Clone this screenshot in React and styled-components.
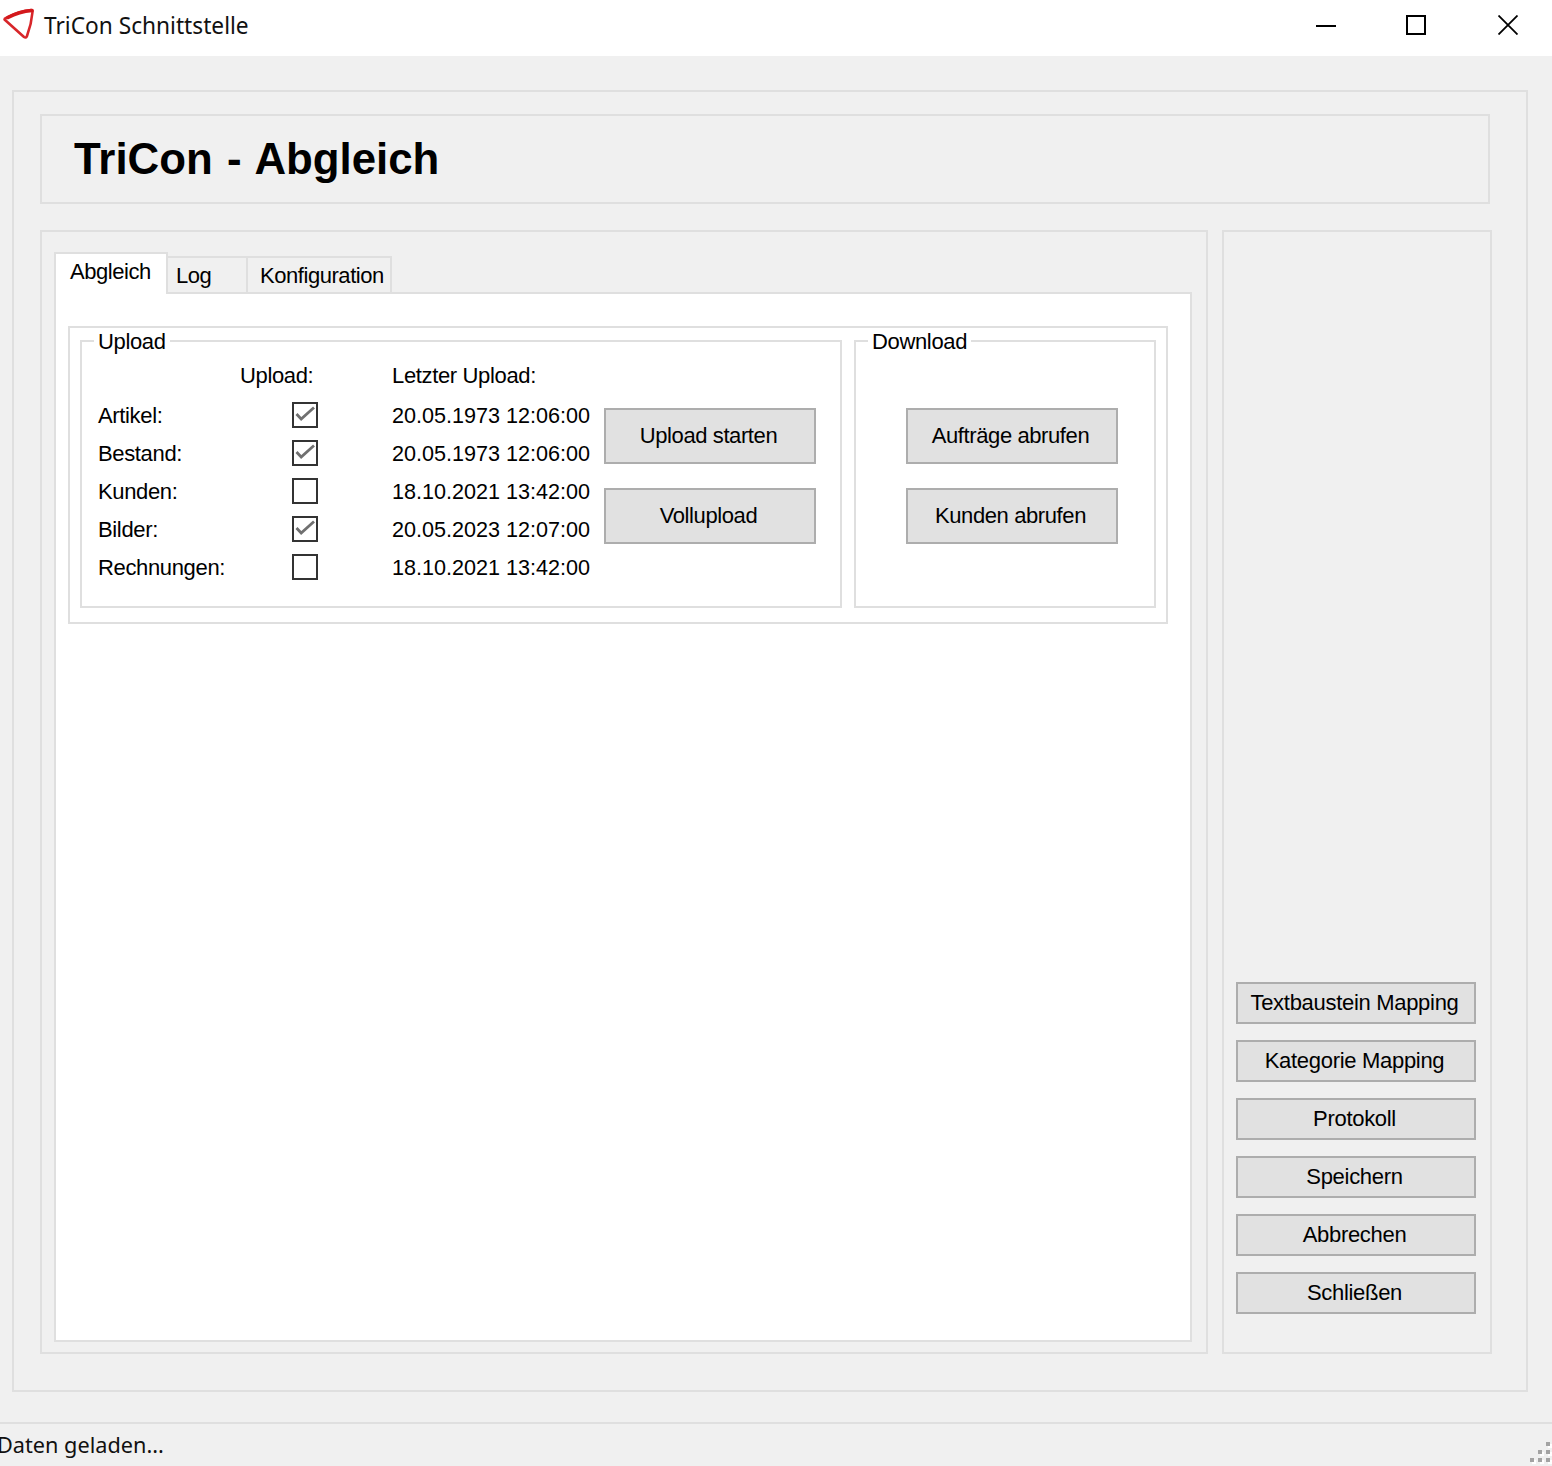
import React from "react";
import styled, { createGlobalStyle } from "styled-components";

const GlobalStyle = createGlobalStyle`
  html, body {
    margin: 0;
    padding: 0;
    background: #f0f0f0;
  }
  * {
    box-sizing: border-box;
  }
`;

const Win = styled.div`
  width: 1552px;
  height: 1466px;
  display: flex;
  flex-direction: column;
  overflow: hidden;
  background: #f0f0f0;
  color: #000;
  font-family: "Liberation Sans", Arial, sans-serif;
  font-size: 22px;
`;

const TitleBar = styled.header`
  height: 56px;
  flex: none;
  display: flex;
  align-items: center;
  background: #fff;
  padding: 0 34px 6px 2px;
`;

const WinTitle = styled.span`
  margin-left: 8px;
  padding-top: 2px;
  flex: 1;
  font-family: "Noto Sans", sans-serif;
  font-size: 22.700px;
  line-height: 30px;
  color: #111;
`;

const WinControls = styled.div`
  display: flex;
  gap: 70px;
  & > svg:last-child {
    margin-left: 2px;
  }
`;

const Main = styled.main`
  flex: 1;
  min-height: 0;
  padding: 34px 24px 30px 12px;
`;

const Frame = styled.div`
  height: 100%;
  border: 2px solid #dfdfdf;
  padding: 22px 34px 36px 26px;
  display: flex;
  flex-direction: column;
  gap: 26px;
`;

const Header = styled.div`
  height: 90px;
  flex: none;
  margin-right: 2px;
  border: 2px solid #dfdfdf;
  padding-left: 32px;
  display: flex;
  align-items: center;
`;

const Heading = styled.h1`
  margin: 0;
  font-family: "Liberation Sans", Arial, sans-serif;
  font-size: 43.800px;
  font-weight: 700;
  line-height: 50px;
  word-spacing: 2.200px;
`;

const Columns = styled.div`
  flex: 1;
  min-height: 0;
  display: grid;
  grid-template-columns: 1168px 270px;
  gap: 14px;
`;

const LeftPanel = styled.section`
  border: 2px solid #dfdfdf;
  padding: 20px 14px 10px 12px;
  display: flex;
  flex-direction: column;
`;

const TabStrip = styled.div`
  height: 42px;
  flex: none;
  display: flex;
  align-items: flex-end;
  margin-bottom: -2px;
`;

const Tab = styled.div`
  position: relative;
  width: ${(p) => p.$width}px;
  height: ${(p) => (p.$active ? 42 : 38)}px;
  padding-top: 5px;
  padding-left: ${(p) => p.$pad}px;
  line-height: 26px;
  letter-spacing: -0.45px;
  background: ${(p) => (p.$active ? "#fff" : "#f0f0f0")};
  border: 2px solid #dfdfdf;
  border-left-width: ${(p) => (p.$active ? 2 : 0)}px;
  border-bottom-width: ${(p) => (p.$active ? 0 : 2)}px;
  z-index: ${(p) => (p.$active ? 2 : 0)};
`;

const TabBody = styled.div`
  flex: 1;
  min-height: 0;
  background: #fff;
  border: 2px solid #dfdfdf;
  padding: 32px 22px 0 12px;
`;

const GroupRow = styled.div`
  height: 298px;
  border: 2px solid #dfdfdf;
  padding: 12px 10px 14px;
  display: flex;
  gap: 12px;
`;

const Group = styled.div`
  position: relative;
  width: ${(p) => p.$width}px;
  height: 268px;
  border: 2px solid #dfdfdf;
  display: flex;
  padding-top: ${(p) => p.$top}px;
  padding-left: ${(p) => p.$left}px;
`;

const Legend = styled.span`
  position: absolute;
  top: -13px;
  left: 12px;
  padding: 0 4px;
  background: #fff;
  line-height: 26px;
  letter-spacing: -0.35px;
`;

const UploadTable = styled.div`
  display: grid;
  grid-template-columns: 142px 152px 212px;
  grid-auto-rows: 38px;
  grid-template-rows: 40px;
  align-items: center;
  line-height: 26px;
`;

const HeadCell = styled.span`
  letter-spacing: -0.35px;
  white-space: nowrap;
`;

const Cell = styled(HeadCell)`
  padding-top: 2px;
`;

const DateCell = styled.span`
  padding-top: 2px;
  white-space: nowrap;
  font-size: 21.600px;
`;

const CheckBox = styled.span`
  width: 26px;
  height: 26px;
  margin-left: 52px;
  border: 2px solid #333;
  background: #fff;
  display: flex;
  align-items: center;
  justify-content: center;
`;

const ButtonStack = styled.div`
  display: flex;
  flex-direction: column;
  gap: 24px;
  padding-top: ${(p) => p.$top || 0}px;
`;

const Button = styled.button`
  width: 212px;
  height: 56px;
  flex: none;
  padding: 0 3px 0 0;
  background: #e1e1e1;
  border: 2px solid #adadad;
  border-radius: 0;
  font-family: "Liberation Sans", Arial, sans-serif;
  font-size: 22px;
  letter-spacing: -0.4px;
  color: #000;
`;

const SideButton = styled(Button)`
  width: 240px;
  height: 42px;
  letter-spacing: -0.3px;
`;

const RightPanel = styled.aside`
  border: 2px solid #dfdfdf;
  padding: 0 14px 38px 12px;
  display: flex;
  flex-direction: column;
  justify-content: flex-end;
  gap: 16px;
`;

const StatusBar = styled.footer`
  position: relative;
  height: 44px;
  flex: none;
  border-top: 2px solid #dfdfdf;
  display: flex;
  align-items: center;
  padding-bottom: 2px;
`;

const StatusText = styled.span`
  margin-left: -3px;
  font-family: "Noto Sans", sans-serif;
  font-size: 21.700px;
  color: #111;
`;

const Grip = styled.svg`
  position: absolute;
  right: 0;
  bottom: 0;
`;

const Logo = () => (
  <svg width="34" height="42" viewBox="0 0 34 42">
    <path
      d="M2.500 15.500 Q2.500 14.500 4 14 Q16 7.500 29 6 Q31 6 30.500 8 Q29.500 20 25 32 Q24 34.500 22 33 Z"
      fill="#fff"
      stroke="#d8262a"
      strokeWidth="2.600"
      strokeLinejoin="round"
    />
    <path d="M6 13.500 Q17 7.500 30 6.500" fill="none" stroke="#d3191c" strokeWidth="3.600" strokeLinecap="round" />
  </svg>
);

const Check = () => (
  <svg width="22" height="22" viewBox="0 0 22 22">
    <path d="M2.500 10 L7.200 15 L20 3.500" fill="none" stroke="#707070" strokeWidth="2.800" />
  </svg>
);

const rows = [
  { name: "Artikel:", on: true, date: "20.05.1973 12:06:00" },
  { name: "Bestand:", on: true, date: "20.05.1973 12:06:00" },
  { name: "Kunden:", on: false, date: "18.10.2021 13:42:00" },
  { name: "Bilder:", on: true, date: "20.05.2023 12:07:00" },
  { name: "Rechnungen:", on: false, date: "18.10.2021 13:42:00" },
];

const sideButtons = [
  "Textbaustein Mapping",
  "Kategorie Mapping",
  "Protokoll",
  "Speichern",
  "Abbrechen",
  "Schließen",
];

const gripDots = [
  [1546, 1442],
  [1538, 1450],
  [1546, 1450],
  [1530, 1458],
  [1538, 1458],
  [1546, 1458],
];

export default function App() {
  return (
    <>
      <GlobalStyle />
      <Win>
        <TitleBar>
          <Logo />
          <WinTitle>TriCon Schnittstelle</WinTitle>
          <WinControls>
            <svg width="20" height="20" viewBox="0 0 20 20">
              <rect x="0" y="10" width="20" height="2" fill="#000" />
            </svg>
            <svg width="20" height="20" viewBox="0 0 20 20">
              <rect x="1" y="1" width="18" height="18" fill="none" stroke="#000" strokeWidth="2" />
            </svg>
            <svg width="20" height="20" viewBox="0 0 20 20">
              <path d="M0.500 0.500 L19.500 19.500 M19.500 0.500 L0.500 19.500" stroke="#000" strokeWidth="1.800" />
            </svg>
          </WinControls>
        </TitleBar>

        <Main>
          <Frame>
            <Header>
              <Heading>TriCon - Abgleich</Heading>
            </Header>
            <Columns>
              <LeftPanel>
                <TabStrip>
                  <Tab $active $width={114} $pad={14}>Abgleich</Tab>
                  <Tab $width={80} $pad={8}>Log</Tab>
                  <Tab $width={144} $pad={12}>Konfiguration</Tab>
                </TabStrip>
                <TabBody>
                  <GroupRow>
                    <Group $width={762} $top={14} $left={16}>
                      <Legend>Upload</Legend>
                      <UploadTable>
                        <span />
                        <HeadCell>Upload:</HeadCell>
                        <HeadCell>Letzter Upload:</HeadCell>
                        {rows.map((row) => (
                          <React.Fragment key={row.name}>
                            <Cell>{row.name}</Cell>
                            <CheckBox>{row.on && <Check />}</CheckBox>
                            <DateCell>{row.date}</DateCell>
                          </React.Fragment>
                        ))}
                      </UploadTable>
                      <ButtonStack $top={52}>
                        <Button>Upload starten</Button>
                        <Button>Vollupload</Button>
                      </ButtonStack>
                    </Group>
                    <Group $width={302} $top={66} $left={50}>
                      <Legend>Download</Legend>
                      <ButtonStack>
                        <Button>Aufträge abrufen</Button>
                        <Button>Kunden abrufen</Button>
                      </ButtonStack>
                    </Group>
                  </GroupRow>
                </TabBody>
              </LeftPanel>
              <RightPanel>
                {sideButtons.map((label) => (
                  <SideButton key={label}>{label}</SideButton>
                ))}
              </RightPanel>
            </Columns>
          </Frame>
        </Main>

        <StatusBar>
          <StatusText>Daten geladen...</StatusText>
          <Grip width="24" height="30" viewBox="1528 1436 24 30">
            {gripDots.map(([x, y]) => (
              <React.Fragment key={`${x}-${y}`}>
                <rect x={x + 2} y={y + 2} width="4" height="4" fill="#fff" />
                <rect x={x} y={y} width="4" height="4" fill="#a3a3a3" />
              </React.Fragment>
            ))}
          </Grip>
        </StatusBar>
      </Win>
    </>
  );
}
